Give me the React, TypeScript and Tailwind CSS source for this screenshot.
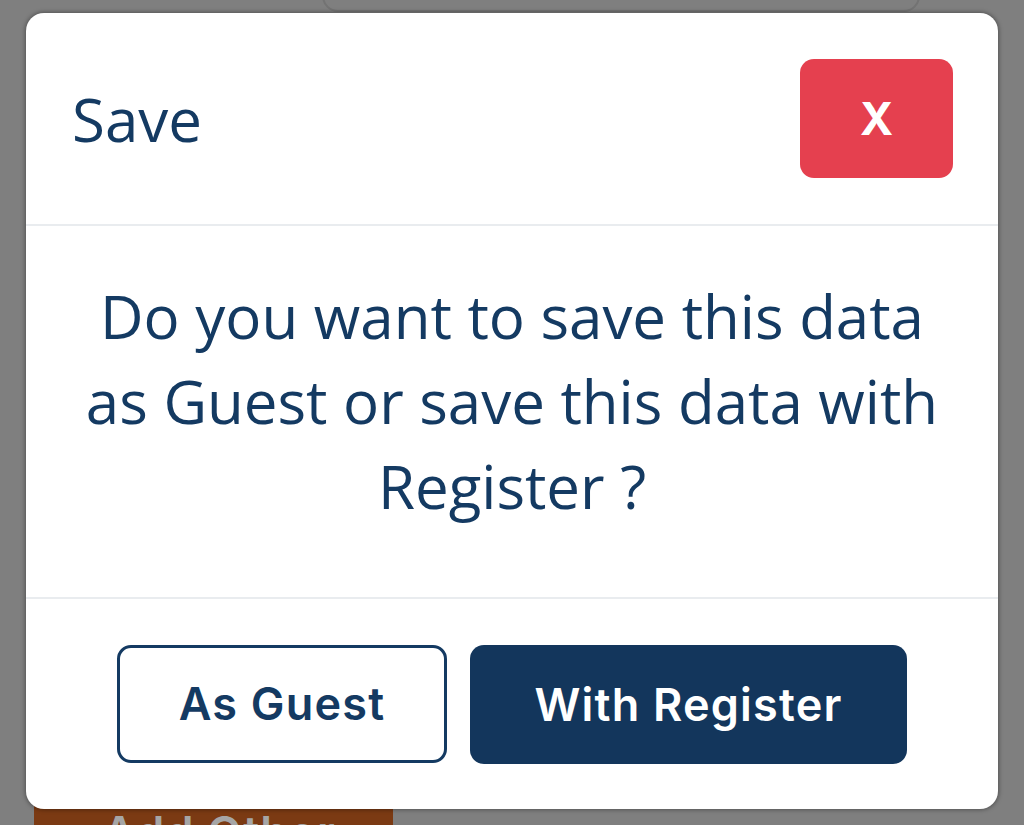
import React from 'react';

const body = { fontFamily: '"Open Sans", "Noto Sans", sans-serif' };
const btn = { fontFamily: 'Inter, "Noto Sans", sans-serif' };

function SaveModal() {
    return (
        <div className="absolute left-[26px] top-[13px] flex h-[796px] w-[972px] flex-col rounded-[18px] bg-white shadow-[0_0_4px_1px_rgba(0,0,0,0.35)]">
            <div className="flex h-[213px] items-center justify-between border-b-2 border-[#e9ecef] pl-[46px] pr-[45px]">
                <h5 style={body} className="text-[60px] leading-none text-[#143a62]">Save</h5>
                <button style={btn} className="flex h-[119px] w-[153px] items-center justify-center rounded-[14px] bg-[#e5404f] text-[45px] font-bold text-white">
                    X
                </button>
            </div>

            <div className="flex h-[373px] items-center justify-center border-b-2 border-[#e9ecef] px-[46px] pb-[20px]">
                <p style={body} className="text-center text-[60px] leading-[85px] text-[#143a62]">
                    Do you want to save this data as Guest or save this data with Register ?
                </p>
            </div>

            <div className="flex flex-1 items-start justify-center gap-[23px] pt-[46px]">
                <button style={btn} className="h-[118px] w-[330px] rounded-[14px] border-[3px] border-[#143a62] bg-white text-[45px] font-semibold tracking-[1.2px] text-[#143a62]">
                    As Guest
                </button>
                <button style={btn} className="h-[119px] w-[437px] rounded-[14px] bg-[#13365c] text-[45px] font-semibold tracking-[1.2px] text-white">
                    With Register
                </button>
            </div>
        </div>
    );
}

export default function App() {
    return (
        <div className="relative h-[825px] w-[1024px] overflow-hidden bg-[#7f7f7f]">
            {/* page behind the backdrop */}
            <div className="ml-[322px] mt-[-60px] h-[72px] w-[598px] rounded-[16px] border-2 border-[#737373]" />
            <div className="ml-[34px] mt-[737px] h-[120px] w-[359px] bg-[#7b3a13] pl-[69px] pt-[61px]">
                <span style={btn} className="block text-[45px] font-semibold leading-none tracking-[1.2px] text-[#a6a6a6]">
                    Add Other
                </span>
            </div>

            <SaveModal />
        </div>
    );
}
